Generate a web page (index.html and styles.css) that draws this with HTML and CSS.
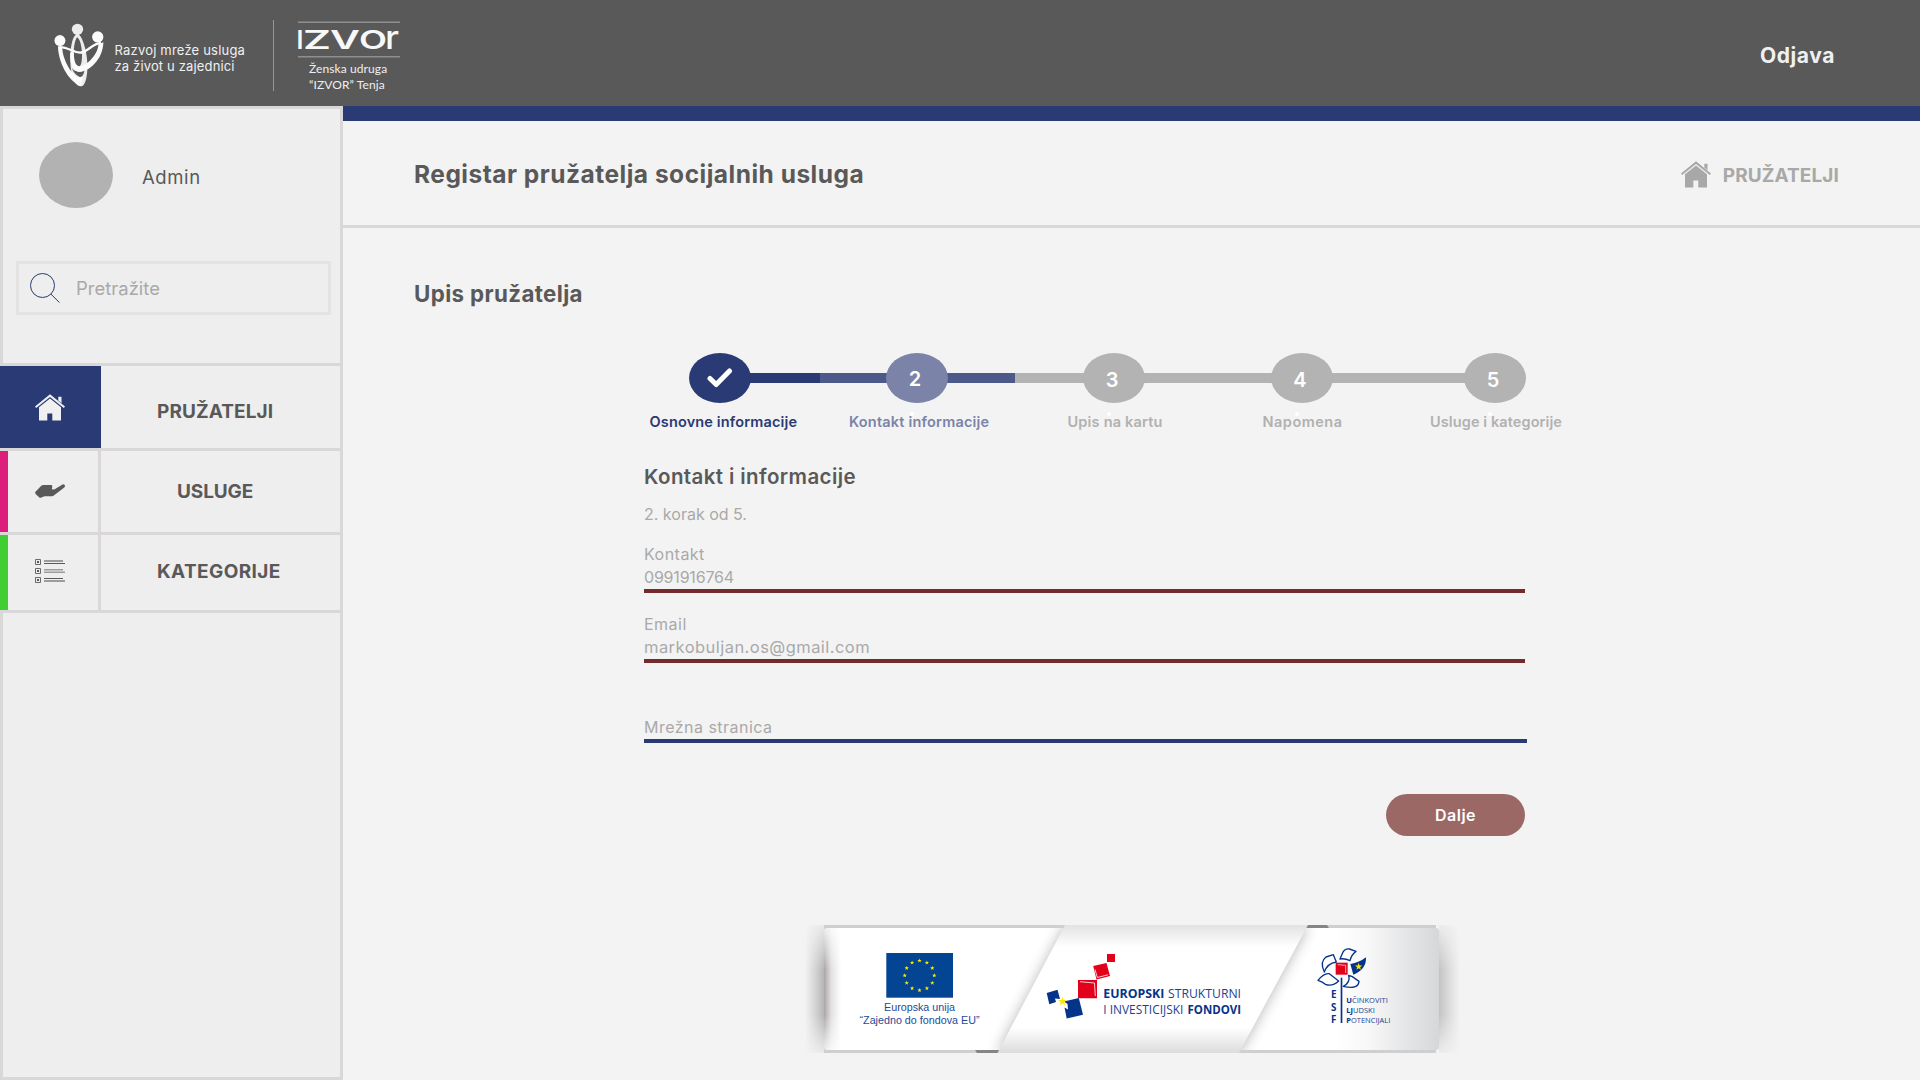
FILE: index.html
```html
<!DOCTYPE html>
<html lang="hr">
<head>
<meta charset="utf-8">
<title>Registar pružatelja socijalnih usluga</title>
<link rel="stylesheet" href="styles.css">
</head>
<body>
<svg class="sprite" aria-hidden="true">
  <symbol id="house" viewBox="0 0 30 27">
    <path d="M23.3 2.8h3.2v6.4l-3.2-2.8z"/>
    <path d="M15 .2 30 12.6 28.8 14 15 2.9 1.2 14 0 12.6z"/>
    <path d="M15 4.4 26 13.3V26.6H17.3V19.4H12.3V26.6H4V13.3z"/>
  </symbol>
</svg>

<header class="topbar">
  <svg class="brand-mark" viewBox="27 22 149 193">
    <circle cx="97" cy="41" r="17" fill="#ececec"/>
    <circle cx="44" cy="75" r="16.5" fill="#fcfcfc"/>
    <circle cx="158" cy="64" r="17" fill="#fcfcfc"/>
    <path fill="#ececec" fill-rule="evenodd" d="M97 54C112 60 127 110 127 150C127 185 120 213 108 213C92 212 72 190 76 110C79 76 86 58 97 54ZM96 65C88 72 84 105 86 132C88 152 96 158 104 152C115 146 113 76 96 65Z"/>
    <path fill="#595959" d="M85 164C97 172 112 170 118 164C117 174 112 188 102 184C90 178 84 170 80 158Z"/>
    <path fill="#fcfcfc" d="M38 91C39 138 66 194 106 212C112 206 114 194 112 184C104 188 96 184 88 178C67 160 52 122 51 98Z"/>
    <path fill="#fcfcfc" d="M175 80C174 138 122 175 98 168C80 162 73 140 75 112L86 112C86 138 92 152 103 153C130 149 160 112 160 86Z"/>
    <path fill="none" stroke="#fcfcfc" stroke-width="7" d="M42 95C65 92 88 114 108 111C128 108 142 84 168 82"/>
  </svg>
  <p class="brand-name">Razvoj mreže usluga<br><span class="brand-second">za život u zajednici</span></p>
  <div class="brand-divider"></div>
  <div class="partner">
    <svg class="partner-logo" viewBox="0 0 102 38">
      <path d="M0 1.2H102M0 35.8H102" stroke="#8f8f8f" stroke-width="1.6"/>
      <g class="wordmark">
        <text x="-1.500" y="27.5">I</text>
        <text x="5" y="27.5" textLength="28" lengthAdjust="spacingAndGlyphs">Z</text>
        <text x="32" y="27.5" textLength="30" lengthAdjust="spacingAndGlyphs">V</text>
        <text x="61" y="27.5" textLength="28" lengthAdjust="spacingAndGlyphs">O</text>
        <text class="wordmark-r" x="87" y="27.500" textLength="14" lengthAdjust="spacingAndGlyphs">r</text>
      </g>
    </svg>
    <p class="partner-name">Ženska udruga<br>“IZVOR” Tenja</p>
  </div>
  <a class="logout">Odjava</a>
</header>

<div class="layout">
  <aside class="sidebar">
    <div class="profile">
      <div class="avatar"></div>
      <span class="profile-name">Admin</span>
    </div>
    <div class="search">
      <svg class="search-icon" viewBox="0 0 30 30"><circle cx="12.500" cy="12.500" r="12"/><path d="M21 21.200 29.500 29.600"/></svg>
      <span>Pretražite</span>
    </div>
    <nav class="menu">
      <a class="menu-item menu-item-active">
        <span class="menu-icon"><svg class="house"><use href="#house"/></svg></span>
        <span class="menu-label">PRUŽATELJI</span>
      </a>
      <a class="menu-item menu-item-services">
        <span class="menu-icon">
          <svg class="hand" viewBox="0 0 30 14"><path d="M0 8.200 6.500 1.600Q7.200 1 8.500 1H15.800Q17.500 1 17.300 2.600L16.800 5.200 19.300 5.500 27.500.500Q29 0 29.800 1.200 30.300 2.500 29.300 3.400L18.800 11.600Q18 12.200 17 12.200H9.500L5 14 .8 10.300Z"/></svg>
        </span>
        <span class="menu-label">USLUGE</span>
      </a>
      <a class="menu-item menu-item-categories">
        <span class="menu-icon">
          <svg class="list" viewBox="0 0 30 24">
            <g fill="none" stroke="#6a6a6a"><path d="M.5.500h5v5h-5zM.5 9.500h5v5h-5zM.5 18.500h5v5h-5z"/></g>
            <path fill="#595959" d="M2 2h2v2H2zM2 11h2v2H2zM2 20h2v2H2zM9 4h21v1H9zM9 19h19v1H9z"/>
            <path fill="#9c9c9c" d="M9 1h19v2H9zM9 10h19v1.500H9zM9 12.500h21V14H9zM9 21h21v2H9z"/>
          </svg>
        </span>
        <span class="menu-label">KATEGORIJE</span>
      </a>
    </nav>
  </aside>

  <main class="main">
    <div class="page-head">
      <h1 class="page-title">Registar pružatelja socijalnih usluga</h1>
      <div class="crumb"><svg class="house"><use href="#house"/></svg><span>PRUŽATELJI</span></div>
    </div>
    <h2 class="section-title">Upis pružatelja</h2>

    <div class="steps">
      <span class="step step-done"><svg class="check" viewBox="0 0 26 20"><path d="M3 10.500 9.200 16.500 22.500 3"/></svg></span>
      <span class="link link-done"></span>
      <span class="step step-current">2</span>
      <span class="link link-half"></span>
      <span class="step">3</span>
      <span class="link link-short"></span>
      <span class="step">4</span>
      <span class="link"></span>
      <span class="step">5</span>
    </div>
    <div class="step-labels">
      <span class="label-done">Osnovne informacije</span>
      <span class="label-current">Kontakt informacije</span>
      <span>Upis na kartu</span>
      <span class="label-note">Napomena</span>
      <span class="label-last">Usluge i kategorije</span>
    </div>

    <form class="form">
      <h3 class="form-title">Kontakt i informacije</h3>
      <p class="form-step">2. korak od 5.</p>
      <div class="field">
        <span class="field-label">Kontakt</span>
        <span class="field-number">0991916764</span>
      </div>
      <div class="field">
        <span class="field-label">Email</span>
        <span class="field-email">markobuljan.os@gmail.com</span>
      </div>
      <div class="field field-web">
        <span class="field-label">Mrežna stranica</span>
      </div>
      <button class="next" type="button">Dalje</button>
    </form>

    <svg class="funds" viewBox="805 925 655 128">
      <defs>
        <linearGradient id="outL"><stop offset="0" stop-color="#888" stop-opacity="0"/><stop offset="1" stop-color="#777" stop-opacity=".5"/></linearGradient>
        <linearGradient id="inL"><stop offset="0" stop-color="#aaa6a6"/><stop offset=".45" stop-color="#e4e2e2"/><stop offset="1" stop-color="#fff"/></linearGradient>
        <linearGradient id="outR"><stop offset="0" stop-color="#888" stop-opacity=".45"/><stop offset="1" stop-color="#999" stop-opacity="0"/></linearGradient>
        <linearGradient id="endR"><stop offset="0" stop-color="#fff"/><stop offset=".3" stop-color="#f8f8f8"/><stop offset="1" stop-color="#d5d7d9"/></linearGradient>
        <linearGradient id="mid" x2="0" y2="1"><stop offset="0" stop-color="#e2e2e2"/><stop offset=".17" stop-color="#fff"/><stop offset=".8" stop-color="#fff"/><stop offset="1" stop-color="#dcdcdc"/></linearGradient>
        <linearGradient id="fadeY" x2="0" y2="1"><stop offset="0" stop-color="#fff" stop-opacity=".15"/><stop offset=".35" stop-color="#fff"/><stop offset=".7" stop-color="#fff"/><stop offset="1" stop-color="#fff" stop-opacity=".15"/></linearGradient>
        <mask id="edgeFade" maskUnits="userSpaceOnUse" x="805" y="925" width="655" height="128"><rect x="805" y="925" width="655" height="128" fill="url(#fadeY)"/></mask>
        <filter id="soft" x="-20%" y="-20%" width="140%" height="140%"><feGaussianBlur stdDeviation="7"/></filter>
        <clipPath id="panel"><rect x="824" y="928" width="615" height="122" rx="3"/></clipPath>
        <path id="star" d="M0-2.300.540-.740 2.190-.710.870.280 1.350 1.860 0 .920-1.350 1.860-.870.280-2.190-.710-.540-.740Z"/>
      </defs>
      <g mask="url(#edgeFade)">
        <rect x="805" y="925" width="19" height="128" fill="url(#outL)"/>
        <rect x="1439" y="925" width="21" height="128" fill="url(#outR)"/>
      </g>
      <rect x="824" y="925" width="612" height="128" fill="#cfcfcf"/>
      <g clip-path="url(#panel)">
        <rect x="824" y="928" width="615" height="122" fill="#fff"/>
        <rect x="1335" y="928" width="104" height="122" fill="url(#endR)"/>
        <rect x="824" y="928" width="17" height="122" fill="url(#inL)" mask="url(#edgeFade)"/>
        <path d="M1066 925H1308L1239 1053H998Z" fill="#8a8a8a" opacity=".65" filter="url(#soft)"/>
      </g>
      <path fill="#858585" d="M975 1050h25l-2 3h-21zM1306 925h21l2 3h-24z"/>
      <path fill="url(#mid)" d="M1065 925H1308L1239 1053H997.500Z"/>

      <rect x="886.300" y="953" width="66.700" height="44.700" fill="#034592"/>
      <g fill="#ffed00" transform="translate(919.500 975.500)">
        <use href="#star" y="-14.800"/><use href="#star" x="7.400" y="-12.800"/><use href="#star" x="12.800" y="-7.400"/><use href="#star" x="14.800"/><use href="#star" x="12.800" y="7.400"/><use href="#star" x="7.400" y="12.800"/><use href="#star" y="14.800"/><use href="#star" x="-7.400" y="12.800"/><use href="#star" x="-12.800" y="7.400"/><use href="#star" x="-14.800"/><use href="#star" x="-12.800" y="-7.400"/><use href="#star" x="-7.400" y="-12.800"/>
      </g>
      <g class="eu-text" text-anchor="middle">
        <text x="919.500" y="1011.200" textLength="71" lengthAdjust="spacingAndGlyphs">Europska unija</text>
        <text x="919.500" y="1023.600" textLength="120" lengthAdjust="spacingAndGlyphs">“Zajedno do fondova EU”</text>
      </g>

      <path fill="#e2001a" d="M1107 954h8v8h-8zM1093.200 966 1106.500 963 1110 976 1096.500 979.500zM1078 980h19v18.300h-19z"/>
      <path fill="none" stroke="#fff" stroke-width=".8" d="M1095 969.500 1097.300 977.500 1108 974.800M1080 981.700 1094.500 983 1095.300 996"/>
      <path fill="#04348a" d="M1046.700 993 1057.500 989.800 1060 999 1055 998.500 1056 1002 1049.300 1004.300zM1064 1001.500 1078.800 998 1083 1014.800 1066.700 1018.500 1064.500 1007.500 1068 1009.500 1067.500 1004z"/>
      <use href="#star" fill="#ffe600" transform="translate(1062.500 1001.500) scale(2)"/>
      <g class="fund-text">
        <text class="bold" x="1103.300" y="998" textLength="61" lengthAdjust="spacingAndGlyphs">EUROPSKI</text>
        <text x="1168" y="998" textLength="73" lengthAdjust="spacingAndGlyphs">STRUKTURNI</text>
        <text x="1103.300" y="1014" textLength="80" lengthAdjust="spacingAndGlyphs">I INVESTICIJSKI</text>
        <text class="bold" x="1187.500" y="1014" textLength="53.500" lengthAdjust="spacingAndGlyphs">FONDOVI</text>
      </g>

      <g transform="translate(1310 940) scale(.33333)">
        <g fill="#fff" stroke="#04348a" stroke-width="4" stroke-linejoin="round">
          <path d="M90 57 98 38Q105 25 118 27L138 34Q124 44 120 62Q104 54 90 57Z"/>
          <path d="M43 96Q28 66 48 51L70 44 79 66Q52 70 43 96Z"/>
          <path d="M24 121Q42 98 58 101L86 123Q68 140 48 134 37 125 24 121Z"/>
          <path d="M116 106 127 110 147 124Q144 150 100 139Q122 127 116 106Z"/>
        </g>
        <path fill="#04348a" d="M121 72Q148 68 168 52Q170 88 130 104Z"/>
        <use href="#star" fill="#ffe600" transform="translate(146 80) scale(5)"/>
        <path fill="#e2001a" d="M77 68h36v36H77z"/>
        <path fill="none" stroke="#fff" stroke-width="2" d="M83 74 107 76V99"/>
        <path stroke="#04348a" stroke-width="5" d="M94.500 113V249"/>
      </g>
      <g class="esf-letters"><text x="1331" y="998">E</text><text x="1331" y="1010.700">S</text><text x="1331" y="1023.300">F</text></g>
      <g class="esf-text">
        <text x="1346.300" y="1002.700" textLength="41.500" lengthAdjust="spacingAndGlyphs"><tspan class="bold">U</tspan>ČINKOVITI</text>
        <text x="1346.300" y="1012.800" textLength="28.500" lengthAdjust="spacingAndGlyphs"><tspan class="bold">LJ</tspan>UDSKI</text>
        <text x="1346.300" y="1022.800" textLength="44" lengthAdjust="spacingAndGlyphs"><tspan class="bold">P</tspan>OTENCIJALI</text>
      </g>
    </svg>
  </main>
</div>
</body>
</html>
```
FILE: styles.css
```css
:root {
  --navy: #2a3a75;
  --line: #d9d7d7;
  --ink: #595959;
  --muted: #a9a9a9;
  --grey: #b3b3b3;
}
* { box-sizing: border-box; margin: 0; padding: 0; }
body {
  width: 1920px;
  height: 1080px;
  overflow: hidden;
  font-family: Inter, "Noto Sans", sans-serif;
  color: var(--ink);
  background: #f3f3f3;
}
.sprite { display: none; }

/* Top bar */
.topbar {
  display: flex;
  align-items: flex-start;
  height: 106px;
  background: #595959;
  color: #f0f0f0;
}
.brand-mark { width: 50px; height: 64px; margin: 22.500px 0 0 54px; }
.brand-name {
  width: 158.500px;
  margin: 42px 0 0 10.500px;
  font-size: 13px;
  line-height: 16px;
  letter-spacing: .2px;
}
.brand-second { letter-spacing: .15px; }
.brand-divider { width: 1px; height: 71px; margin-top: 19.500px; background: #979797; }
.partner { width: 102px; margin: 21px 0 0 24px; }
.partner-logo { display: block; width: 102px; height: 38px; overflow: visible; }
.partner-name {
  margin: 2px 0 0 11px;
  font: 12px/16px Lato, sans-serif;
  letter-spacing: .1px;
  white-space: nowrap;
}
.wordmark { font: 600 25px Inter, sans-serif; fill: #f8f8f8; }
.wordmark-r { font-size: 32px; font-weight: 500; }
.logout {
  margin: 41px 85px 0 auto;
  font-size: 21px;
  font-weight: 700;
  line-height: 30px;
  letter-spacing: .6px;
}

.layout { display: flex; height: 974px; }

/* Sidebar */
.sidebar {
  width: 343px;
  background: #eee;
  border: 3px solid var(--line);
}
.profile { display: flex; align-items: center; gap: 29px; margin: 33px 0 0 36px; height: 66px; }
.avatar { width: 74px; height: 66px; border-radius: 50%; background: #b2b2b2; }
.profile-name { padding-top: 4px; font-size: 18.500px; letter-spacing: .6px; }
.search {
  display: flex;
  align-items: center;
  gap: 16px;
  width: 315px;
  height: 54px;
  margin: 53px 0 0 13px;
  padding-left: 11px;
  border: 3px solid #e3e3e3;
  font-size: 18.400px;
  letter-spacing: .05px;
  color: var(--muted);
}
.search-icon { width: 30px; height: 30px; fill: none; stroke: var(--navy); }
.menu { margin: 48px 0 0 -3px; border-top: 3px solid var(--line); }
.menu-item { display: flex; height: 85px; border-bottom: 3px solid var(--line); }
.menu-icon {
  display: flex;
  align-items: center;
  justify-content: center;
  width: 101px;
  padding-right: 1px;
  border-right: 3px solid var(--line);
}
.menu-label {
  padding: 31px 0 0 56px;
  font-size: 19px;
  font-weight: 700;
  line-height: 30px;
  letter-spacing: .1px;
}
.menu-item-active .menu-icon { background: var(--navy); border: 0; }
.menu-item-services { height: 84px; }
.menu-item-services .menu-icon { border-left: 8px solid #dc1f7b; padding-right: 6px; }
.menu-item-services .menu-label { padding: 26px 0 0 76px; letter-spacing: -.1px; }
.menu-item-categories { height: 78px; }
.menu-item-categories .menu-icon { border-left: 8px solid #40ce33; padding-right: 6px; }
.menu-item-categories .menu-label { padding: 22px 0 0 56px; letter-spacing: .4px; }
.house { width: 30px; height: 27px; fill: currentColor; }
.menu-icon .house { color: #f0f0f0; }
.hand { width: 30px; height: 14px; fill: var(--ink); margin-bottom: 2px; }
.list { width: 30px; height: 24px; margin-bottom: 3px; }

/* Main */
.main { flex: 1; border-top: 15px solid var(--navy); }
.page-head {
  display: flex;
  justify-content: space-between;
  height: 107px;
  padding: 0 81px 0 71px;
  border-bottom: 3px solid var(--line);
}
.page-title { padding-top: 38px; font-size: 24.500px; line-height: 30px; letter-spacing: .5px; }
.crumb {
  display: flex;
  align-items: center;
  gap: 12px;
  height: 107px;
  font-size: 19px;
  font-weight: 700;
  letter-spacing: .1px;
  color: #a8a8a8;
}
.crumb span { padding-top: 1px; }
.section-title {
  margin: 51px 0 0 71px;
  font-size: 22.300px;
  line-height: 30px;
  letter-spacing: .38px;
}

/* Steps */
.steps { display: flex; align-items: center; width: 837px; margin: 44px 0 0 345.500px; }
.step {
  position: relative;
  display: flex;
  flex: none;
  align-items: center;
  justify-content: center;
  width: 62px;
  height: 50px;
  border-radius: 50%;
  background: var(--grey);
  color: #fff;
  font-size: 20px;
  font-weight: 600;
  line-height: 50px;
  padding: 3px 3px 0 0;
}
.step:not(.step-done)::after {
  content: "";
  position: absolute;
  left: 24px;
  top: 59px;
  width: 4px;
  height: 4px;
  border-radius: 50%;
  background: #fff;
}
.step-done { background: var(--navy); padding: 0; }
.step-current { background: #7b83a8; padding: 1px 3px 0 0; }
.link { flex: 1; height: 10.500px; margin: 0 -1px; background: var(--grey); }
.link-done { background: linear-gradient(90deg, var(--navy) 51%, #4d5a89 51%); flex: 0 0 137px; }
.link-half { background: linear-gradient(90deg, #4d5a89 50%, var(--grey) 50%); flex: 0 0 137px; }
.link-short { flex: 0 0 128px; }
.check { width: 26px; height: 20px; fill: none; stroke: #fff; stroke-width: 5; stroke-linecap: round; stroke-linejoin: round; }
.step-labels {
  display: grid;
  grid-template-columns: 199.500px 218.500px 195px 167.500px 140px;
  margin: 9px 0 0 306.500px;
  font-size: 14.500px;
  font-weight: 600;
  line-height: 20px;
  letter-spacing: .2px;
  color: #b1b1b1;
}
.label-done { color: var(--navy); letter-spacing: .15px; }
.label-current { color: #7b83a8; }
.step-labels .label-note { letter-spacing: .5px; }
.step-labels .label-last { letter-spacing: .1px; }

/* Form */
.form { width: 881px; margin: 30px 0 0 301px; }
.form-title { font-size: 20.500px; font-weight: 600; line-height: 30px; letter-spacing: .4px; }
.form-step { margin: 12px 0 18px; font-size: 16px; line-height: 21px; color: var(--muted); }
.field {
  display: flex;
  flex-direction: column;
  margin-bottom: 20px;
  border-bottom: 4px solid #742b2d;
  font-size: 16px;
  line-height: 23px;
  color: var(--muted);
}
.field-label { letter-spacing: .48px; }
.field-number { letter-spacing: -.2px; }
.field-email { font-size: 16.500px; letter-spacing: .45px; }
.field-web { width: 883px; margin-top: 53px; border-color: var(--navy); }
.next {
  display: block;
  width: 139px;
  height: 42px;
  margin: 51px 0 0 auto;
  border: 0;
  border-radius: 21px;
  background: #9b6866;
  color: #fff;
  font: 600 16px Inter, sans-serif;
  letter-spacing: .5px;
}

/* Funding banner */
.funds { display: block; width: 655px; height: 128px; margin: 89px 0 0 462px; }
.eu-text { font: 10.600px "Liberation Sans", sans-serif; fill: #1f4a96; }
.fund-text { font: 12.600px "Open Sans", sans-serif; fill: #1c428f; }
.esf-letters { font: 700 9.800px "Open Sans", sans-serif; fill: #04348a; }
.esf-text { font: 7.700px "Open Sans", sans-serif; fill: #1c428f; }
.bold { font-weight: 700; fill: #04348a; }
```
